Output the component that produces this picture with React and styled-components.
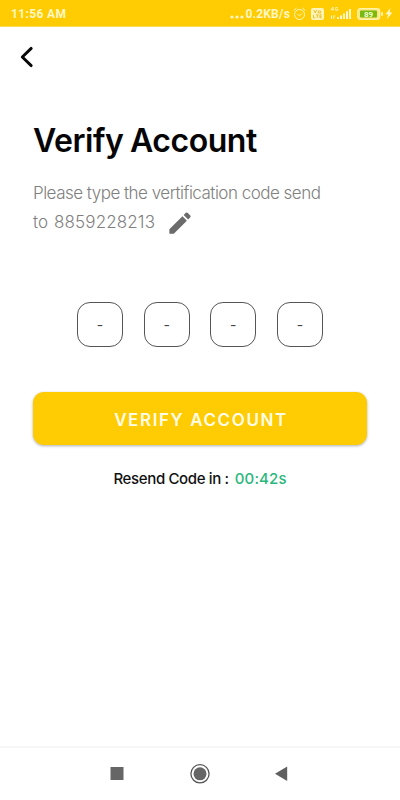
import React from "react";
import styled, { createGlobalStyle } from "styled-components";

const GlobalStyle = createGlobalStyle`
  * { box-sizing: border-box; }
  body { margin: 0; background: #fff; }
`;

const Screen = styled.div`
  width: 400px;
  height: 800px;
  display: flex;
  flex-direction: column;
  background: #fff;
  font-family: Inter, sans-serif;
  overflow: hidden;
`;

const StatusBar = styled.header`
  height: 27px;
  flex: none;
  display: flex;
  align-items: center;
  justify-content: space-between;
  padding: 1px 7px 0 11px;
  background: #ffcb02;
  border-bottom: 1px solid #ffdc58;
  color: #fff8c4;
  font: 700 11px/14px Roboto, sans-serif;
`;

const Clock = styled.span`
  font-size: 12px;
  letter-spacing: 0.35px;
`;

const StatusItems = styled.div`
  display: flex;
  align-items: center;
`;

const NetSpeed = styled.span`
  display: flex;
  align-items: center;
  font-size: 12px;
  letter-spacing: 0.2px;
  margin-right: 3px;
`;

const StatusIcon = styled.svg`
  display: block;
  flex: none;
  margin-right: ${(p) => p.$gap || 0}px;
`;

const TopBar = styled.nav`
  height: 60px;
  flex: none;
  padding: 19px 0 0 20px;
`;

const BackButton = styled.button`
  display: block;
  border: 0;
  padding: 0;
  background: none;
`;

const Content = styled.main`
  flex: 1;
  padding: 34px 33px 0;
`;

const Title = styled.h1`
  margin: 0;
  font-size: 32px;
  line-height: 40px;
  font-weight: 600;
  letter-spacing: -0.45px;
  word-spacing: -1px;
  color: #050505;
  white-space: nowrap;
`;

const Message = styled.div`
  margin-top: 18px;
  font-size: 17px;
  line-height: 29px;
  font-weight: 300;
  letter-spacing: -0.51px;
  color: #808080;
  white-space: nowrap;
`;

const PhoneRow = styled.div`
  display: flex;
  align-items: center;
`;

const Prefix = styled.span`
  letter-spacing: 0;
`;

const Phone = styled.span`
  margin: 0 12px 0 6px;
  letter-spacing: 0.13px;
`;

const CodeRow = styled.div`
  display: flex;
  justify-content: space-between;
  width: 246px;
  margin: 65px auto 0;
`;

const CodeCell = styled.div`
  width: 46px;
  height: 45px;
  border: 1px solid #555;
  border-radius: 13px;
  display: flex;
  align-items: center;
  justify-content: center;
  font-size: 14px;
  line-height: 18px;
  color: #444;
`;

const VerifyButton = styled.button`
  display: block;
  width: 100%;
  height: 53px;
  margin-top: 45px;
  padding: 2px 0 0 2px;
  border: 0;
  border-radius: 11px;
  background: #ffcb02;
  box-shadow: 0 1px 3px rgba(0, 0, 0, 0.32);
  color: #fffde8;
  font: 600 17px/22px Inter, sans-serif;
  letter-spacing: 1.6px;
`;

const Resend = styled.div`
  display: flex;
  justify-content: center;
  gap: 6px;
  margin-top: 24px;
  font-size: 15px;
  line-height: 20px;
  font-weight: 500;
  letter-spacing: -0.35px;
  color: #111;
`;

const Timer = styled.span`
  color: #2bb77c;
  letter-spacing: 0.12px;
`;

const NavBar = styled.footer`
  height: 54px;
  flex: none;
  border-top: 2px solid #f6f6f6;
  display: flex;
  align-items: center;
  justify-content: center;
  gap: 62px;
  padding: 1px 1px 2px 0;
`;

export default function App() {
  return (
    <Screen>
      <GlobalStyle />
      <StatusBar>
        <Clock>11:56 AM</Clock>
        <StatusItems>
          <StatusIcon width="15" height="14" viewBox="0 0 15 14" fill="currentColor">
            <circle cx="2" cy="10" r="1.6" />
            <circle cx="7" cy="10" r="1.6" />
            <circle cx="12" cy="10" r="1.6" />
          </StatusIcon>
          <NetSpeed>0.2KB/s</NetSpeed>
          <StatusIcon $gap={5} width="13" height="14" viewBox="0 0 13 14" fill="none" stroke="currentColor">
            <circle cx="6.5" cy="7.5" r="5" />
            <path d="M.7 3.6 3.6 1M9.4 1l2.9 2.6M4.4 7l2.1 1.8L9 6.3" />
          </StatusIcon>
          <StatusIcon $gap={6} width="13" height="12" viewBox="0 0 13 12">
            <rect width="13" height="12" rx="2" fill="#fff5b8" />
            <path d="M3 2l1.3 3L5.6 2M7.3 3h2.4v2H7.3zM2.5 6.8v3h1.7M5 6.8h2.6M6.3 7v3M10.8 6.8H8.9v3h1.9M9 8.3h1.7" fill="none" stroke="#e6b610" strokeWidth=".8" />
          </StatusIcon>
          <StatusIcon $gap={6} width="21" height="13" viewBox="0 0 21 13" fill="currentColor">
            <path d="M3 0v3.6M3 .2 1 2.6h2.6M7.8.6H5.6v2.8h2.2V2H6.8" fill="none" stroke="currentColor" strokeWidth=".8" />
            <path d="M1 8.5h1V12H1zM3.2 8.5h2v1h-1V12h-1zM7 10h2v2H7zM10 8.5h2V12h-2zM13 6.5h2V12h-2zM16 4.2h2V12h-2zM19 2h2v10h-2z" />
          </StatusIcon>
          <StatusIcon $gap={2} width="26" height="12" viewBox="0 0 26 12">
            <rect x=".7" y=".7" width="22" height="10.6" rx="2.5" fill="#ffe67d" stroke="#fff3a8" strokeWidth="1.2" />
            <rect x="3" y="2.5" width="17" height="7" rx="1" fill="#78b80f" />
            <rect x="24" y="4" width="2" height="4" rx="1" fill="#fff3a8" />
            <text x="11.5" y="8.9" textAnchor="middle" fontFamily="Roboto, sans-serif" fontWeight="700" fontSize="8" fill="#f7ffd0">89</text>
          </StatusIcon>
          <StatusIcon width="8" height="11" viewBox="0 0 8 11" fill="currentColor">
            <path d="M5.5 0 .5 6.2h2.7L2 11l5.5-6.6H4.6z" />
          </StatusIcon>
        </StatusItems>
      </StatusBar>
      <TopBar>
        <BackButton aria-label="Back">
          <svg width="14" height="22" viewBox="0 0 14 22" fill="none" stroke="#080808" strokeWidth="2.9" strokeLinecap="round" strokeLinejoin="round" display="block">
            <path d="M11.2 2.4 2.3 11l8.9 8.6" />
          </svg>
        </BackButton>
      </TopBar>
      <Content>
        <Title>Verify Account</Title>
        <Message>
          Please type the vertification code send
          <PhoneRow>
            <Prefix>to</Prefix>
            <Phone>8859228213</Phone>
            <svg width="26" height="25" viewBox="1 1 22 21" fill="#6b6b6b">
              <path d="M3 17.25V21h3.75L17.81 9.94l-3.75-3.75L3 17.25zM20.71 7.04a1 1 0 0 0 0-1.41l-2.34-2.34a1 1 0 0 0-1.41 0l-1.83 1.83 3.75 3.75 1.83-1.83z" />
            </svg>
          </PhoneRow>
        </Message>
        <CodeRow>
          {[0, 1, 2, 3].map((n) => (
            <CodeCell key={n}>-</CodeCell>
          ))}
        </CodeRow>
        <VerifyButton>VERIFY ACCOUNT</VerifyButton>
        <Resend>
          <span>Resend Code in :</span>
          <Timer>00:42s</Timer>
        </Resend>
      </Content>
      <NavBar>
        <svg width="20" height="20" viewBox="0 0 20 20">
          <rect x="2.5" y="3" width="13" height="13" fill="#666" />
        </svg>
        <svg width="20" height="20" viewBox="0 0 20 20">
          <circle cx="10" cy="9.8" r="9.1" fill="none" stroke="#555" strokeWidth="1.3" />
          <circle cx="10" cy="9.8" r="6.5" fill="#666" />
        </svg>
        <svg width="20" height="20" viewBox="0 0 20 20">
          <path d="M15.2 2.6v14.4L3 9.8z" fill="#606060" />
        </svg>
      </NavBar>
    </Screen>
  );
}
